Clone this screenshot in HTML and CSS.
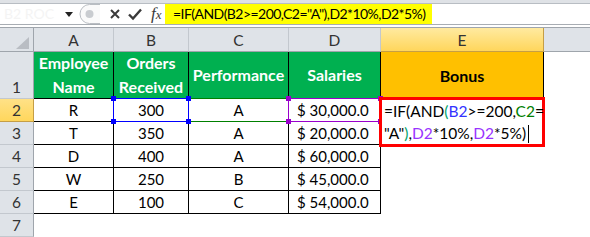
FILE: index.html
```html
<!DOCTYPE html>
<html>
<head>
<meta charset="utf-8">
<link rel="stylesheet" href="styles.css">
</head>
<body>
<div class="app">
  <div class="topstrip"></div>
  <div class="fbar">
    <div class="namebox">
      <span class="nb-text">B2 ROC</span>
      <svg class="dd" width="8" height="5" viewBox="0 0 8 5"><path d="M0 0H8L4 5Z" fill="#222"/></svg>
    </div>
    <div class="tools">
      <svg class="grip" width="22" height="20" viewBox="0 0 22 20">
        <path d="M21 0.5H10.5A9.5 9.5 0 0 0 10.5 19.5H21" fill="#fafafa" stroke="#b9bdc2"/>
        <circle cx="10.5" cy="10" r="4" fill="#c9ccd0"/>
      </svg>
      <svg class="ico" width="14" height="14" viewBox="0 0 14 14"><path d="M3 3L11 11M11 3L3 11" stroke="#3a3a3a" stroke-width="2"/></svg>
      <svg class="ico" width="16" height="14" viewBox="0 0 16 14"><path d="M2 7.5L6 11.5L14 2.5" stroke="#3a3a3a" stroke-width="2.4" fill="none"/></svg>
      <span class="fx">f<span class="fxx">x</span></span>
    </div>
    <div class="formula"><span class="hl">=IF(AND(B2&gt;=200,C2="A"),D2*10%,D2*5%)</span></div>
  </div>
  <div class="gap"></div>

  <div class="sheet">
    <div class="ch corner"><span class="tri"></span></div>
    <div class="ch">A</div>
    <div class="ch">B</div>
    <div class="ch">C</div>
    <div class="ch">D</div>
    <div class="ch ch-act">E</div>
    <div class="ch ch-last"></div>

    <div class="rh rh1">1</div>
    <div class="c g">Employee<br>Name</div>
    <div class="c g">Orders<br>Received</div>
    <div class="c g">Performance</div>
    <div class="c g">Salaries</div>
    <div class="c o">Bonus</div>
    <div class="e"></div>

    <div class="rh rh-act">2</div>
    <div class="c">R</div>
    <div class="c sel">300<span class="box bl"><i class="sq tl"></i><i class="sq tr"></i><i class="sq bl2"></i><i class="sq br"></i></span></div>
    <div class="c sel">A<span class="box gr"><i class="sq tr"></i><i class="sq br"></i></span></div>
    <div class="c m sel">$ 30,000.0<span class="box pu"><i class="sq tl"></i><i class="sq tr"></i><i class="sq bl2"></i><i class="sq br"></i></span></div>
    <div class="e edit"><div class="editbox">=IF(AND<span class="pa">(</span><span class="cb">B2</span>&gt;=200,<span class="cg">C2</span>=<br>"A"<span class="pa">)</span>,<span class="cp">D2</span>*10%,<span class="cp">D2</span>*5%)<span class="caret"></span></div></div>
    <div class="e"></div>

    <div class="rh">3</div>
    <div class="c">T</div>
    <div class="c">350</div>
    <div class="c">A</div>
    <div class="c m">$ 20,000.0</div>
    <div class="e"></div>
    <div class="e"></div>

    <div class="rh">4</div>
    <div class="c">D</div>
    <div class="c">400</div>
    <div class="c">A</div>
    <div class="c m">$ 60,000.0</div>
    <div class="e"></div>
    <div class="e"></div>

    <div class="rh">5</div>
    <div class="c">W</div>
    <div class="c">250</div>
    <div class="c">B</div>
    <div class="c m">$ 45,000.0</div>
    <div class="e"></div>
    <div class="e"></div>

    <div class="rh">6</div>
    <div class="c">E</div>
    <div class="c">100</div>
    <div class="c">C</div>
    <div class="c m">$ 54,000.0</div>
    <div class="e"></div>
    <div class="e"></div>

    <div class="rh">7</div>
    <div class="e"></div>
    <div class="e"></div>
    <div class="e"></div>
    <div class="e"></div>
    <div class="e"></div>
    <div class="e"></div>
  </div>
</div>
</body>
</html>
```

FILE: styles.css
```css
* { box-sizing: border-box; margin: 0; padding: 0; }
html, body { width: 590px; height: 237px; overflow: hidden; background: #fff; }
body { font-family: Lato, "Open Sans", sans-serif; font-size: 15px; color: #000; }

.app { width: 590px; height: 237px; display: flex; flex-direction: column; }

.topstrip { height: 4px; background: #dfe2e6; border-bottom: 1px solid #b8bdc3; }
.fbar { height: 21px; display: flex; align-items: stretch; border-bottom: 1px solid #a8adb3; background: #fff; }
.namebox { width: 79px; display: flex; align-items: center; justify-content: space-between; padding: 0 6px 0 4px; }
.nb-text { color: #f4f4f4; font-size: 14px; }
.dd { margin-top: 1px; }
.tools { width: 86px; display: flex; align-items: center; background: #fff; }
.grip { margin-right: 7px; }
.ico { margin-right: 5px; }
.fx { font-family: "Liberation Serif", serif; font-style: italic; font-size: 17px; color: #3a3a3a; margin-left: 3px; line-height: 1; }
.fxx { font-size: 13px; }
.formula { flex: 1; display: flex; align-items: stretch; }
.hl { background: #ffff00; padding: 0 7px 0 8px; font-size: 14px; letter-spacing: -0.55px; line-height: 20px; }

.gap { height: 3px; background: #fff; }

.sheet {
  flex: 1;
  display: grid;
  grid-template-columns: 34px 80px 75px 100px 92px 163px 46px;
  grid-template-rows: 24px 47px repeat(6, 23px);
  border-top: 1px solid #9fa5ac;
}

.ch {
  background: #dfe3e8;
  border-right: 1px solid #c3c8ce;
  border-bottom: 1px solid #9fa5ac;
  display: flex; align-items: center; justify-content: center;
  color: #333; font-size: 15.5px;
}
.corner { position: relative; border-right-color: #9fa5ac; }
.tri { position: absolute; right: 4px; bottom: 2px; width: 0; height: 0; border-left: 13px solid transparent; border-bottom: 12px solid #b9bdc3; }
.ch-act { background: linear-gradient(#ffeaa0, #ffd65c); border-right-color: #c59e45; border-bottom-color: #c59e45; }
.ch-last { border-right: none; }

.rh {
  background: #dfe3e8;
  border-right: 1px solid #9fa5ac;
  border-bottom: 1px solid #c3c8ce;
  display: flex; align-items: center; justify-content: center;
  color: #333; font-size: 15.5px;
}
.rh1 { align-items: flex-end; padding-bottom: 2px; }
.rh-act { background: linear-gradient(#ffe187, #ffd65c); border-right-color: #c59e45; border-bottom-color: #c59e45; }

.c {
  border-right: 1px solid #000;
  border-bottom: 1px solid #000;
  display: flex; align-items: center; justify-content: center;
  text-align: center; position: relative;
}
.c.m { justify-content: flex-start; padding-left: 8px; }
.g { background: #00b050; color: #fff; font-weight: 700; font-size: 16px; line-height: 24px; }
.o { background: #ffc000; color: #000; font-weight: 700; font-size: 16px; }
.e { position: relative; }

.box { position: absolute; top: -1px; left: -1px; right: -1px; bottom: -1px; border: 1px solid; }
.box.bl { border-color: #0000ff; z-index: 3; }
.box.gr { border-color: #008000; z-index: 1; }
.box.pu { border-color: #9900cc; z-index: 1; }
.sq { position: absolute; width: 5px; height: 5px; }
.box.bl .sq { background: #0000ff; }
.box.gr .sq { background: #008000; }
.box.pu .sq { background: #9900cc; }
.sq.tl { top: -3px; left: -3px; }
.sq.tr { top: -3px; right: -3px; }
.sq.bl2 { bottom: -3px; left: -3px; }
.sq.br { bottom: -3px; right: -3px; }

.editbox {
  position: absolute; left: -2px; top: -2px; width: 166px; height: 50px;
  border: 3px solid #ff0000; background: #fff;
  padding: 0 0 0 2px; line-height: 22px; font-size: 15.5px; white-space: nowrap;
  z-index: 4;
}
.cb { color: #3333ff; }
.cg { color: #008000; }
.cp { color: #9933ff; }
.pa { color: #00a36c; }
.caret { display: inline-block; width: 1px; height: 18px; background: #000; vertical-align: -4px; margin-left: 2px; }
```
